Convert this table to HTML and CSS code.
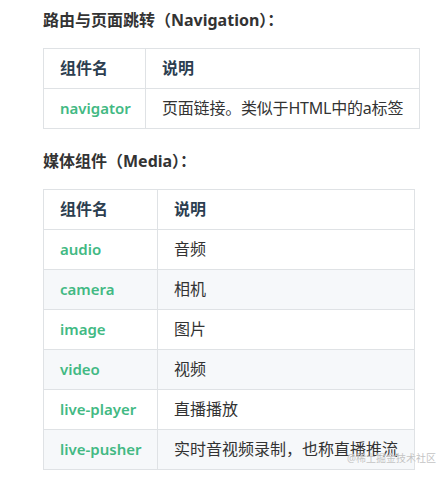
FILE: index.html
```html
<!DOCTYPE html>
<html lang="zh-CN">
<head>
    <meta charset="UTF-8">
    <meta name="viewport" content="width=device-width, initial-scale=1.0">
    <title>组件列表</title>
    <link rel="stylesheet" href="styles.css">
</head>
<body>

    <div class="content">
        <h3>路由与页面跳转（Navigation）：</h3>
        <table class="table-nav">
            <thead>
                <tr><th class="name-col">组件名</th><th>说明</th></tr>
            </thead>
            <tbody>
                <tr><td class="name">navigator</td><td>页面链接。类似于HTML中的a标签</td></tr>
            </tbody>
        </table>

        <h3>媒体组件（Media）：</h3>
        <table class="table-media">
            <thead>
                <tr><th class="name-col">组件名</th><th>说明</th></tr>
            </thead>
            <tbody>
                <tr><td class="name">audio</td><td>音频</td></tr>
                <tr><td class="name">camera</td><td>相机</td></tr>
                <tr><td class="name">image</td><td>图片</td></tr>
                <tr><td class="name">video</td><td>视频</td></tr>
                <tr><td class="name">live-player</td><td>直播播放</td></tr>
                <tr><td class="name">live-pusher</td><td>实时音视频录制，也称直播推流</td></tr>
            </tbody>
        </table>
    </div>

    <div class="watermark">@稀土掘金技术社区</div>

</body>
</html>
```

FILE: styles.css
```css
* {
    margin: 0;
    padding: 0;
    box-sizing: border-box;
}

body {
    font-family: "Noto Sans", "Noto Sans CJK SC", sans-serif;
    background-color: #ffffff;
    color: #333333;
    position: relative;
    min-height: 479px;
}

.content {
    padding: 8px 0 0 43px;
}

h3 {
    font-size: 16px;
    font-weight: 700;
    line-height: 24px;
    color: #333333;
    margin-bottom: 16px;
}

table + h3 {
    margin-top: 20px;
}

table {
    border-collapse: collapse;
    table-layout: fixed;
    font-size: 16px;
}

.table-nav {
    width: 377px;
}

.table-nav .name-col {
    width: 102px;
}

.table-media {
    width: 372px;
}

.table-media .name-col {
    width: 114px;
}

th,
td {
    border: 1px solid #dfe2e5;
    padding: 8px 16px;
    line-height: 23px;
    text-align: left;
    white-space: nowrap;
}

th {
    font-weight: 700;
    color: #2c3e50;
}

td {
    color: #333333;
}

td.name {
    color: #42b983;
    font-size: 15px;
    font-weight: 600;
}

.table-nav td + td {
    letter-spacing: -0.2px;
}

tbody tr:nth-child(2n) {
    background-color: #f6f8fa;
}

.watermark {
    position: absolute;
    left: 347px;
    top: 452px;
    font-size: 10px;
    line-height: 13px;
    color: #c4c4c4;
    text-shadow: 0 0 1px rgba(255, 255, 255, 0.8);
}
```
